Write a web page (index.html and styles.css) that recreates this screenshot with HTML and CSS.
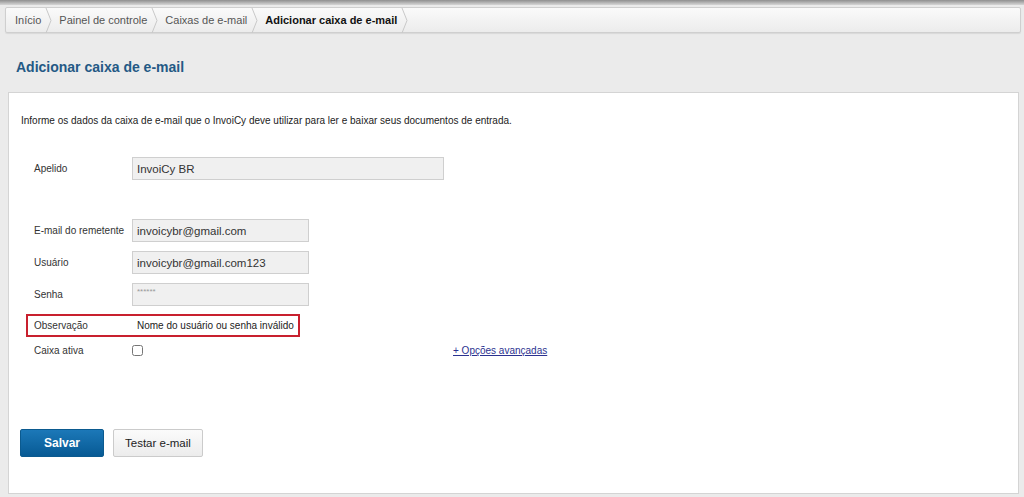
FILE: index.html
```
<!DOCTYPE html>
<html lang="pt-BR">
<head>
    <meta charset="UTF-8">
    <title>Adicionar caixa de e-mail</title>
    <link rel="stylesheet" href="styles.css">
</head>
<body>

<div class="topbar"></div>

<nav class="breadcrumb">
    <a class="crumb" href="#">Início</a>
    <svg class="sep" width="8" height="25" viewBox="0 0 8 25"><polyline points="1,0 6,12.5 1,25" fill="none" stroke="#c8c8c8" stroke-width="1"/></svg>
    <a class="crumb" href="#">Painel de controle</a>
    <svg class="sep" width="8" height="25" viewBox="0 0 8 25"><polyline points="1,0 6,12.5 1,25" fill="none" stroke="#c8c8c8" stroke-width="1"/></svg>
    <a class="crumb" href="#">Caixas de e-mail</a>
    <svg class="sep" width="8" height="25" viewBox="0 0 8 25"><polyline points="1,0 6,12.5 1,25" fill="none" stroke="#c8c8c8" stroke-width="1"/></svg>
    <span class="crumb current">Adicionar caixa de e-mail</span>
    <svg class="sep" width="8" height="25" viewBox="0 0 8 25"><polyline points="1,0 6,12.5 1,25" fill="none" stroke="#c8c8c8" stroke-width="1"/></svg>
</nav>

<h1 class="page-title">Adicionar caixa de e-mail</h1>

<div class="panel">
    <p class="intro">Informe os dados da caixa de e-mail que o InvoiCy deve utilizar para ler e baixar seus documentos de entrada.</p>

    <div class="row row-apelido">
        <label class="label">Apelido</label>
        <input class="field wide" type="text" value="InvoiCy BR">
    </div>

    <div class="row">
        <label class="label">E-mail do remetente</label>
        <input class="field" type="text" value="invoicybr@gmail.com">
    </div>

    <div class="row">
        <label class="label">Usuário</label>
        <input class="field" type="text" value="invoicybr@gmail.com123">
    </div>

    <div class="row">
        <label class="label">Senha</label>
        <input class="field pass" type="text" value="******">
    </div>

    <div class="row obs">
        <span class="label">Observação</span>
        <span class="obs-text">Nome do usuário ou senha inválido</span>
    </div>

    <div class="row ativa">
        <label class="label">Caixa ativa</label>
        <input class="check" type="checkbox">
        <a class="advanced" href="#">+ Opções avançadas</a>
    </div>

    <div class="actions">
        <button class="btn primary">Salvar</button>
        <button class="btn">Testar e-mail</button>
    </div>
</div>

</body>
</html>
```

FILE: styles.css
```
* {
    box-sizing: border-box;
}

body {
    margin: 0;
    background: #ebebeb;
    font-family: Arial, "Liberation Sans", sans-serif;
    color: #222;
    height: 497px;
    overflow: hidden;
}

.topbar {
    height: 5px;
    background: linear-gradient(to bottom, #8f8f8f, #d6d6d6);
}

.breadcrumb {
    display: flex;
    align-items: center;
    height: 26px;
    margin: 2px 3px 0 5px;
    padding-left: 9px;
    background: linear-gradient(to bottom, #fafafa, #ececec);
    border: 1px solid #cfcfcf;
    border-radius: 2px;
    box-shadow: 0 1px 1px rgba(0, 0, 0, 0.08);
}

.crumb {
    font-size: 11px;
    color: #555;
    text-decoration: none;
}

.crumb.current {
    color: #111;
    font-weight: bold;
}

.sep {
    display: block;
    margin: 0 6px 0 4px;
}

.page-title {
    margin: 0;
    padding: 26px 0 0 16px;
    height: 59px;
    font-size: 14px;
    font-weight: bold;
    color: #245985;
}

.panel {
    margin: 0 5px 0 8px;
    height: 402px;
    background: #fff;
    border: 1px solid #d4d4d4;
    padding: 22px 0 0 11px;
}

.intro {
    margin: 0 0 31px;
    padding-left: 1px;
    font-size: 10px;
    color: #222;
}

.row {
    display: flex;
    align-items: center;
    height: 23px;
    margin-bottom: 9px;
    padding-left: 14px;
    font-size: 10px;
}

.row-apelido {
    margin-bottom: 39px;
}

.label {
    width: 98px;
    white-space: nowrap;
    color: #333;
}

.field {
    width: 177px;
    height: 23px;
    padding: 0 4px;
    border: 1px solid #cfcfcf;
    background: #f0f0f0;
    font-family: Arial, "Liberation Sans", sans-serif;
    font-size: 11.5px;
    color: #333;
}

.field.wide {
    width: 312px;
}

.field.pass {
    font-size: 8px;
    color: #999;
    padding-bottom: 6px;
}

.obs {
    width: 274px;
    height: 23px;
    margin: -1px 0 1px 6px;
    padding-left: 6px;
    border: 2px solid #c8202e;
}

.obs .label {
    width: 103px;
}

.obs-text {
    white-space: nowrap;
    color: #222;
}

.ativa {
    height: 24px;
}

.check {
    margin: 0;
    width: 11px;
    height: 11px;
}

.advanced {
    margin-left: 310px;
    color: #2b3290;
    font-size: 10px;
}

.actions {
    display: flex;
    gap: 9px;
    margin-top: 67px;
}

.btn {
    height: 28px;
    padding: 0 11px;
    background: linear-gradient(to bottom, #fbfbfb, #ececec);
    border: 1px solid #cbcbcb;
    border-radius: 2px;
    font-family: Arial, "Liberation Sans", sans-serif;
    font-size: 11.5px;
    color: #222;
}

.btn.primary {
    width: 84px;
    background: linear-gradient(to bottom, #1c78b8, #075a94);
    border-color: #0b5a8f;
    color: #fff;
    font-weight: bold;
    font-size: 12px;
}
```
